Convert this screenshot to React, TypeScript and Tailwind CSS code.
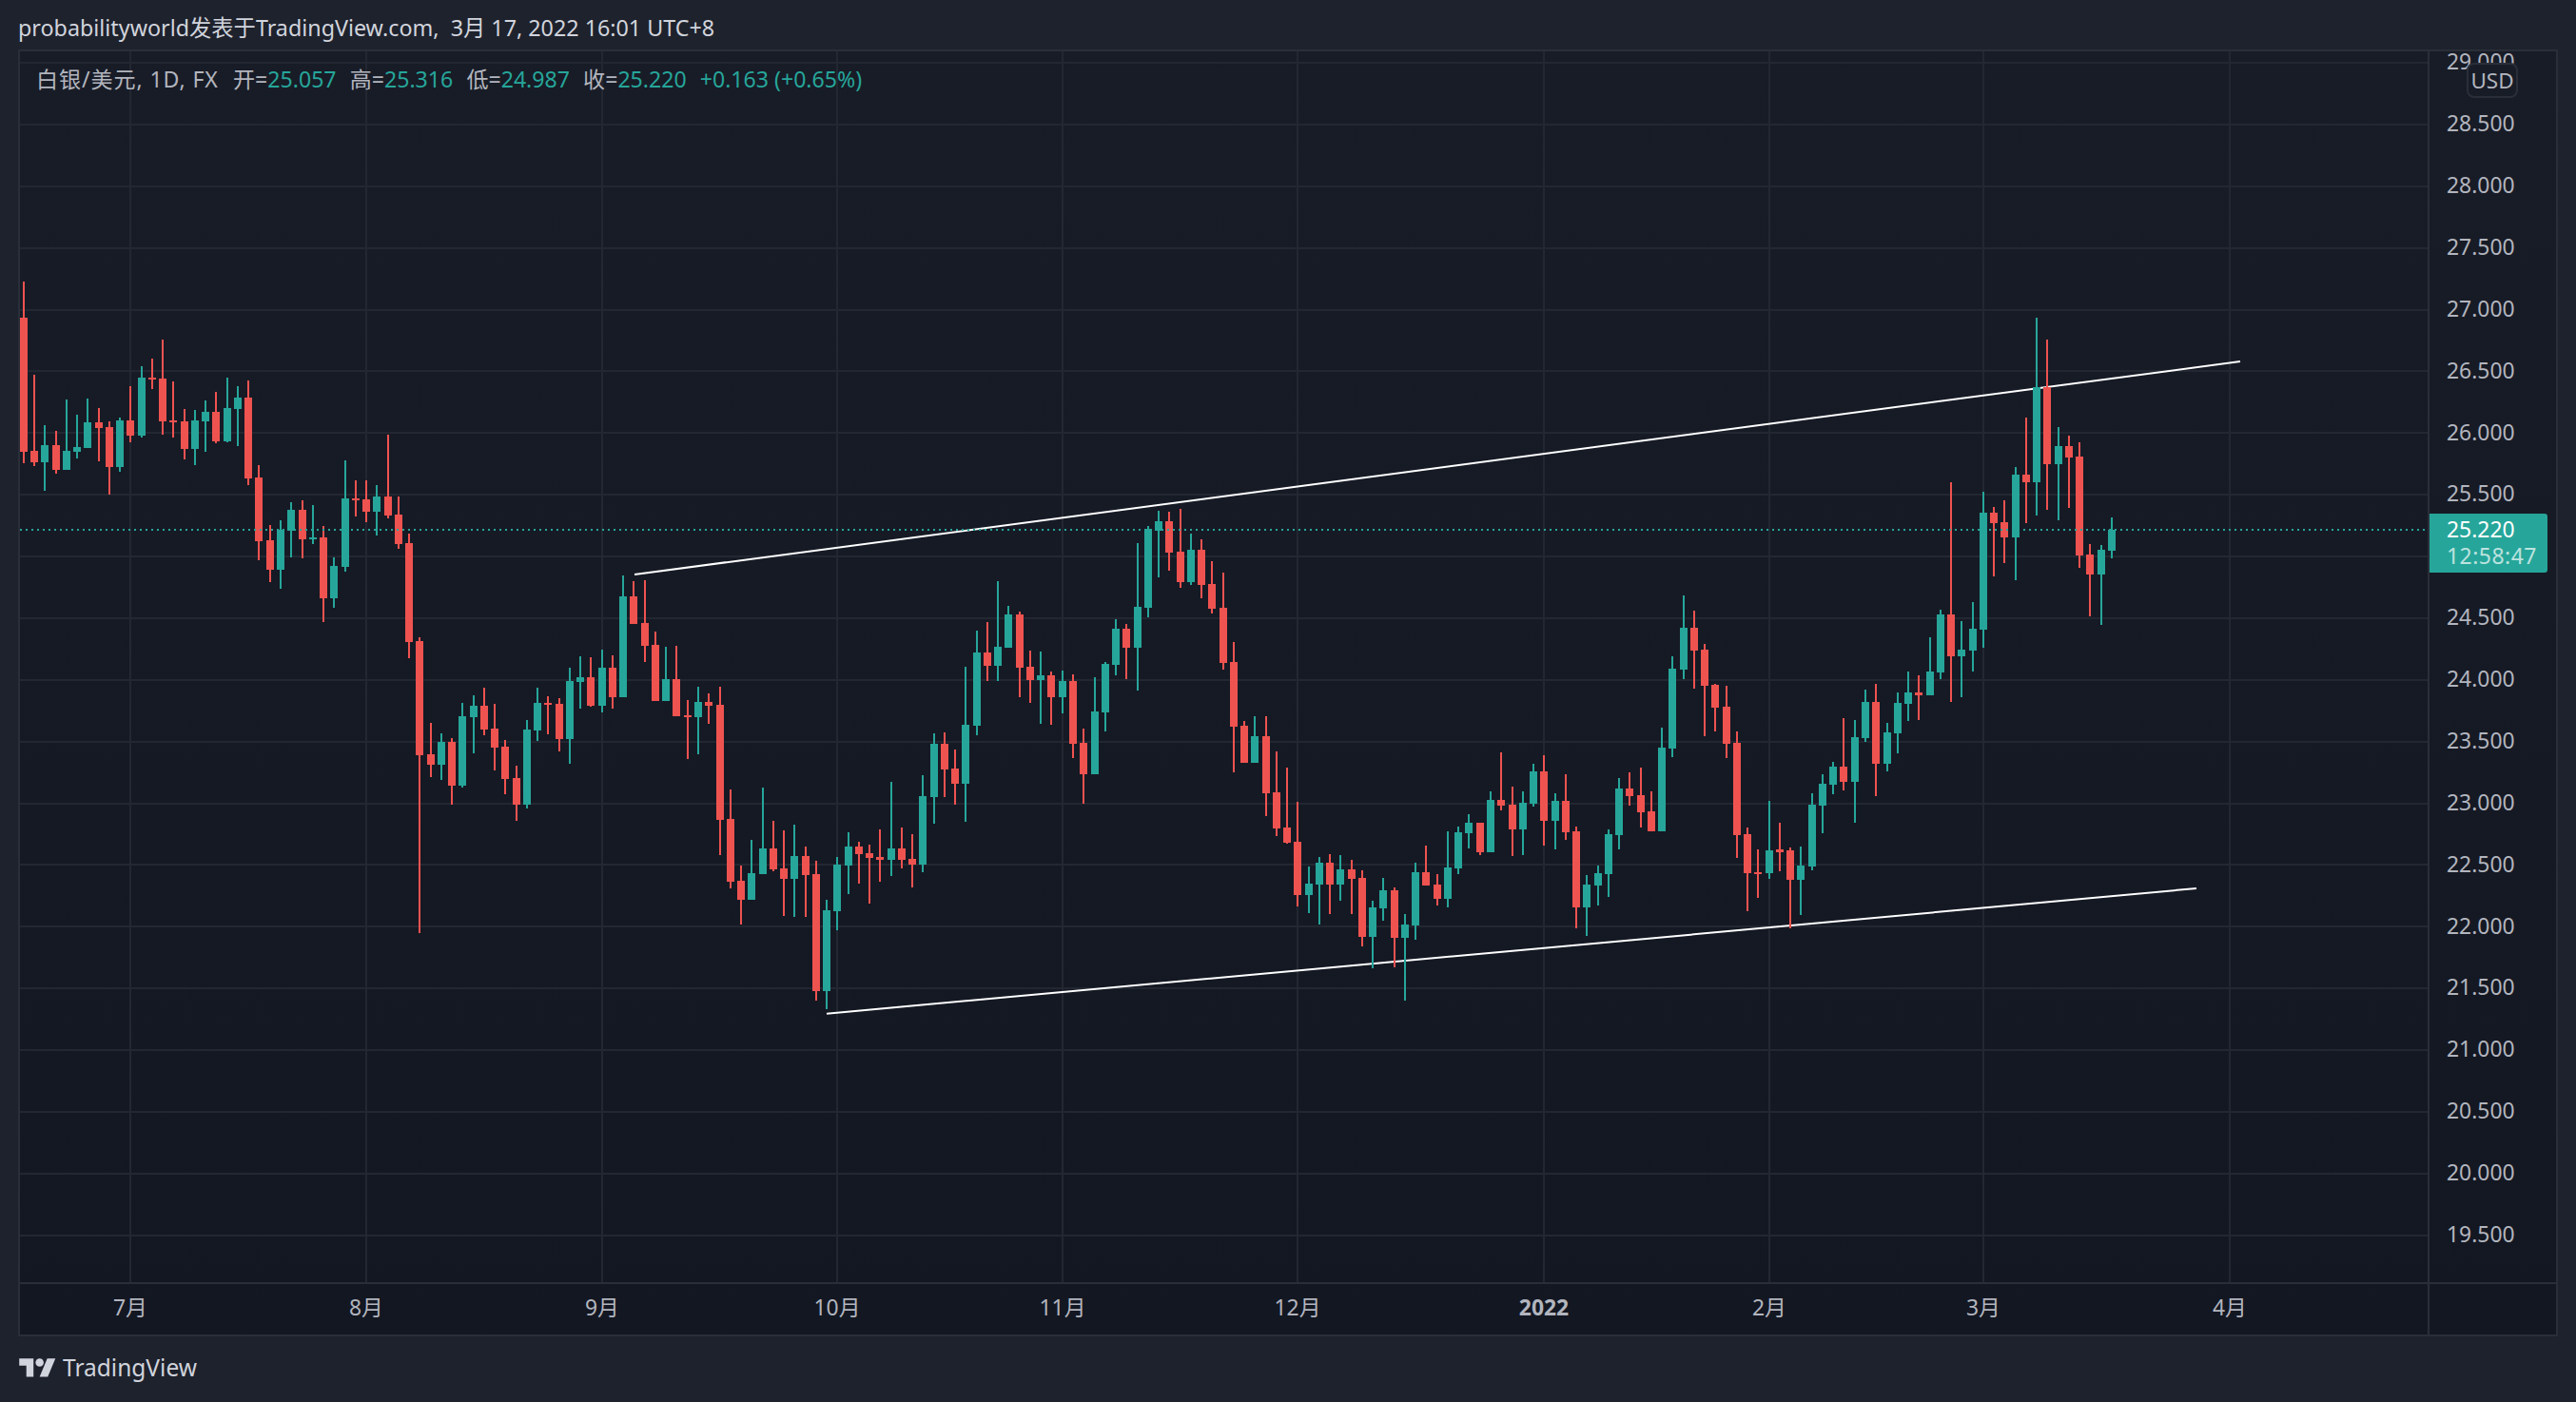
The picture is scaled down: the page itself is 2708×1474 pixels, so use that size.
const UP = "#26a69a";
const DOWN = "#ef5350";

type Row = [number, number, number, number, number, "R" | "G"];
type Segment = { ox: number; oy: number; sy: number; rows: Row[] };

const segments: Segment[] = [
  {
    ox: 0, oy: 280, sy: 3,
    rows: [
      [75, 48, 162, 585, 621, "R"], [108, 342, 582, 618, 630, "R"], [141, 501, 564, 618, 708, "G"],
      [177, 519, 564, 642, 654, "R"], [210, 420, 582, 642, 642, "G"], [243, 468, 570, 585, 606, "G"],
      [276, 417, 492, 573, 573, "G"], [312, 447, 492, 510, 615, "R"], [345, 489, 507, 633, 720, "R"],
      [378, 477, 486, 633, 648, "G"], [411, 378, 486, 534, 555, "R"], [447, 315, 351, 534, 540, "G"],
      [480, 291, 351, 357, 387, "R"], [513, 231, 354, 489, 531, "R"], [546, 363, 486, 492, 540, "R"],
      [582, 450, 489, 576, 609, "R"], [615, 453, 486, 576, 627, "G"], [648, 423, 459, 489, 585, "G"],
      [681, 396, 459, 552, 558, "R"], [717, 351, 447, 552, 555, "G"], [750, 378, 414, 450, 567, "G"],
      [783, 360, 414, 669, 690, "R"], [816, 627, 666, 867, 927, "R"], [852, 816, 864, 957, 996, "R"],
      [885, 801, 831, 957, 1017, "G"], [918, 744, 768, 834, 918, "G"], [954, 738, 768, 861, 921, "R"],
      [987, 753, 855, 861, 876, "G"], [1020, 819, 855, 1047, 1122, "R"], [1053, 918, 945, 1047, 1077, "G"],
      [1089, 612, 732, 948, 963, "G"], [1122, 675, 732, 738, 789, "R"], [1155, 675, 735, 774, 807, "R"],
      [1188, 690, 726, 774, 849, "G"], [1224, 531, 726, 786, 795, "R"], [1257, 726, 783, 876, 891, "R"],
      [1290, 843, 873, 1185, 1236, "R"],
    ],
  },
  {
    ox: 400, oy: 440, sy: 2.8,
    rows: [
      [123, 645, 655, 991, 1515, "R"], [159, 897, 988, 1019, 1056, "R"], [192, 927, 952, 1019, 1064, "G"],
      [225, 942, 952, 1081, 1137, "R"], [258, 837, 876, 1081, 1086, "G"], [294, 815, 846, 879, 986, "G"],
      [327, 792, 846, 916, 932, "R"], [360, 840, 913, 969, 1036, "R"], [393, 945, 966, 1061, 1106, "R"],
      [429, 1022, 1058, 1137, 1184, "R"], [462, 888, 916, 1137, 1148, "G"], [495, 792, 837, 918, 949, "G"],
      [528, 818, 837, 843, 930, "R"], [564, 823, 840, 944, 980, "R"], [597, 734, 773, 944, 1016, "G"],
      [630, 700, 762, 776, 854, "G"], [663, 703, 762, 846, 849, "R"], [699, 680, 734, 846, 865, "G"],
      [732, 697, 734, 820, 854, "R"], [765, 462, 524, 820, 820, "G"], [798, 479, 524, 605, 605, "R"],
      [834, 476, 602, 669, 717, "R"], [867, 627, 666, 832, 832, "R"], [900, 672, 767, 832, 832, "G"],
      [933, 669, 767, 876, 876, "R"], [969, 829, 874, 879, 1002, "R"], [1002, 790, 834, 879, 988, "G"],
      [1035, 809, 834, 846, 899, "R"], [1071, 790, 843, 1182, 1285, "R"], [1104, 1092, 1179, 1364, 1383, "R"],
      [1137, 1316, 1361, 1417, 1490, "R"], [1170, 1240, 1338, 1417, 1417, "G"], [1206, 1086, 1266, 1341, 1341, "G"],
      [1239, 1184, 1266, 1327, 1333, "R"], [1272, 1212, 1324, 1355, 1464, "R"], [1305, 1196, 1288, 1355, 1467, "G"],
      [1341, 1260, 1288, 1344, 1467, "R"],
    ],
  },
  {
    ox: 840, oy: 520, sy: 2.8,
    rows: [
      [54, 1078, 1117, 1462, 1490, "R"], [87, 1193, 1224, 1462, 1515, "G"], [120, 1067, 1089, 1226, 1282, "G"],
      [156, 994, 1036, 1092, 1176, "G"], [189, 1022, 1036, 1058, 1145, "R"], [222, 1030, 1056, 1070, 1204, "R"],
      [255, 986, 1067, 1075, 1140, "R"], [291, 846, 1042, 1075, 1123, "G"], [324, 980, 1042, 1075, 1100, "R"],
      [357, 1000, 1072, 1089, 1156, "R"], [390, 826, 888, 1089, 1112, "G"], [426, 703, 734, 890, 969, "G"],
      [459, 700, 734, 809, 890, "R"], [492, 750, 806, 851, 913, "R"], [525, 507, 678, 851, 963, "G"],
      [561, 400, 465, 680, 708, "G"], [594, 375, 465, 504, 549, "R"], [627, 255, 448, 504, 549, "G"],
      [660, 328, 353, 451, 451, "G"], [696, 344, 353, 510, 596, "R"], [729, 459, 507, 546, 613, "R"],
      [762, 462, 532, 546, 675, "G"], [795, 521, 532, 596, 678, "R"], [831, 518, 549, 596, 644, "G"],
      [864, 529, 549, 734, 776, "R"], [897, 689, 731, 823, 910, "R"], [933, 538, 638, 823, 823, "G"],
      [966, 493, 498, 641, 697, "G"], [999, 367, 395, 501, 532, "G"], [1032, 381, 395, 451, 543, "R"],
      [1068, 143, 330, 451, 577, "G"], [1101, 92, 101, 333, 361, "G"], [1134, 48, 78, 106, 244, "G"],
      [1167, 50, 78, 171, 224, "R"], [1203, 42, 168, 258, 274, "R"], [1236, 115, 162, 258, 266, "G"],
      [1269, 132, 162, 266, 305, "R"], [1302, 196, 263, 336, 350, "R"], [1338, 230, 333, 496, 515, "R"],
    ],
  },
  {
    ox: 1280, oy: 520, sy: 2.8,
    rows: [
      [51, 434, 493, 683, 818, "R"], [84, 666, 680, 790, 790, "R"], [117, 652, 711, 790, 790, "G"],
      [153, 652, 711, 879, 946, "R"], [186, 756, 876, 983, 1005, "R"], [219, 804, 980, 1025, 1028, "R"],
      [252, 904, 1022, 1179, 1212, "R"], [288, 1095, 1145, 1179, 1232, "G"], [321, 1067, 1084, 1148, 1266, "G"],
      [354, 1058, 1084, 1148, 1235, "R"], [387, 1061, 1103, 1148, 1196, "G"], [423, 1075, 1103, 1131, 1235, "R"],
      [456, 1106, 1128, 1302, 1330, "R"], [489, 1196, 1215, 1302, 1394, "G"], [522, 1128, 1165, 1218, 1254, "G"],
      [558, 1156, 1165, 1305, 1392, "R"], [591, 1235, 1266, 1305, 1490, "G"], [624, 1084, 1112, 1268, 1310, "G"],
      [657, 1033, 1112, 1151, 1151, "R"], [693, 1117, 1148, 1190, 1210, "R"], [726, 991, 1098, 1190, 1215, "G"],
      [759, 977, 994, 1100, 1117, "G"], [792, 941, 966, 997, 1042, "G"], [828, 966, 966, 1053, 1061, "R"],
      [861, 874, 899, 1053, 1053, "G"], [894, 759, 899, 916, 930, "R"], [930, 860, 913, 986, 1064, "R"],
      [963, 874, 907, 986, 1061, "G"], [996, 792, 815, 910, 918, "G"], [1029, 767, 815, 960, 1033, "R"],
      [1065, 879, 902, 960, 1044, "G"], [1098, 823, 902, 994, 1016, "R"], [1131, 977, 991, 1215, 1277, "R"],
      [1164, 1120, 1148, 1215, 1299, "G"], [1200, 1092, 1114, 1151, 1210, "G"], [1233, 986, 1000, 1117, 1184, "G"],
      [1266, 834, 865, 1002, 1044, "G"], [1299, 818, 865, 888, 916, "R"], [1335, 804, 885, 935, 980, "R"],
    ],
  },
  {
    ox: 1700, oy: 600, sy: 3,
    rows: [
      [108, 696, 759, 822, 822, "R"], [141, 495, 558, 822, 822, "G"], [174, 270, 309, 561, 588, "G"],
      [210, 78, 180, 312, 342, "G"], [243, 126, 180, 252, 372, "R"], [276, 231, 249, 363, 522, "R"],
      [309, 357, 360, 432, 507, "R"], [345, 363, 429, 546, 591, "R"], [378, 507, 543, 834, 906, "R"],
      [411, 810, 831, 954, 1074, "R"], [444, 879, 950, 956, 1032, "R"], [480, 726, 882, 954, 972, "G"],
      [513, 795, 880, 887, 948, "R"], [546, 873, 882, 975, 1128, "R"], [579, 870, 930, 975, 1086, "G"],
      [615, 702, 738, 933, 945, "G"], [648, 642, 672, 741, 828, "G"], [681, 603, 618, 675, 705, "G"],
      [714, 465, 618, 666, 693, "R"], [750, 471, 525, 666, 795, "G"], [783, 375, 414, 528, 540, "G"],
      [816, 357, 414, 609, 711, "R"], [852, 480, 510, 609, 633, "G"], [885, 384, 417, 513, 576, "G"],
      [918, 318, 384, 420, 474, "G"], [951, 330, 385, 392, 471, "R"], [987, 210, 318, 393, 393, "G"],
    ],
  },
  {
    ox: 2000, oy: 320, sy: 3,
    rows: [
      [120, 963, 978, 1161, 1182, "G"], [153, 561, 978, 1110, 1254, "R"], [186, 999, 1089, 1110, 1239, "G"],
      [222, 939, 1023, 1092, 1158, "G"], [255, 591, 657, 1026, 1083, "G"], [288, 640, 657, 690, 858, "R"],
      [321, 618, 687, 735, 816, "R"], [357, 513, 537, 735, 870, "G"], [390, 357, 537, 561, 690, "R"],
      [423, 42, 261, 561, 666, "G"], [456, 111, 261, 504, 648, "R"], [492, 387, 447, 504, 681, "G"],
      [525, 414, 447, 483, 642, "R"], [558, 435, 480, 792, 831, "R"], [591, 756, 789, 852, 984, "R"],
      [627, 759, 774, 852, 1011, "G"], [660, 672, 711, 777, 801, "G"],
    ],
  },
];

const months = [
  { x: 137, label: "7月" },
  { x: 385, label: "8月" },
  { x: 633, label: "9月" },
  { x: 880, label: "10月" },
  { x: 1117, label: "11月" },
  { x: 1364, label: "12月" },
  { x: 1623, label: "2022", bold: true },
  { x: 1860, label: "2月" },
  { x: 2085, label: "3月" },
  { x: 2344, label: "4月" },
];

const prices = Array.from({ length: 20 }, (_, i) => (29 - i * 0.5).toFixed(3));
const PLOT_LEFT = 21;
const PLOT_TOP = 54;
const PLOT_WIDTH = 2531;
const PLOT_HEIGHT = 1294;
const rowHeight = 64.88;

function Candle({ seg, row }: { seg: Segment; row: Row }) {
  const [zx, wt, bt, bb, wb, c] = row;
  const x = Math.round(seg.ox + zx / 3);
  const y = (v: number) => Math.round(seg.oy + v / seg.sy);
  const fill = c === "R" ? DOWN : UP;
  const top = y(bt);
  const bodyH = Math.max(2, y(bb) - top);
  return (
    <g fill={fill}>
      <rect x={x - 1} y={y(wt)} width={2} height={Math.max(0, y(wb) - y(wt))} />
      <rect x={x - 4} y={top} width={8} height={bodyH} />
    </g>
  );
}

function PlotDrawing() {
  return (
    <svg
      className="block h-full w-full"
      viewBox={`${PLOT_LEFT} ${PLOT_TOP} ${PLOT_WIDTH} ${PLOT_HEIGHT}`}
    >
      <g shapeRendering="crispEdges" fill="#232732">
        {prices.map((_, i) => (
          <rect key={i} x={PLOT_LEFT} y={Math.round(66 + i * rowHeight) - 1} width={PLOT_WIDTH} height={2} />
        ))}
        {months.map((m) => (
          <rect key={m.x} x={m.x - 1} y={PLOT_TOP} width={2} height={PLOT_HEIGHT} />
        ))}
      </g>
      <line x1={667} y1={604} x2={2355} y2={380} stroke="#ffffff" strokeWidth={2} />
      <line x1={869} y1={1065.7} x2={2309} y2={934} stroke="#ffffff" strokeWidth={2} />
      <g shapeRendering="crispEdges">
        {segments.map((seg) => seg.rows.map((row) => <Candle key={`${seg.ox}-${row[0]}`} seg={seg} row={row} />))}
      </g>
      <line
        x1={PLOT_LEFT}
        y1={557}
        x2={PLOT_LEFT + PLOT_WIDTH}
        y2={557}
        stroke={UP}
        strokeWidth={2}
        strokeDasharray="2 4"
        shapeRendering="crispEdges"
      />
    </svg>
  );
}

function Legend() {
  const items = [
    ["开", "25.057"],
    ["高", "25.316"],
    ["低", "24.987"],
    ["收", "25.220"],
  ];
  return (
    <div className="absolute left-[17px] top-[17px] flex items-center whitespace-nowrap text-[23.1px] leading-[24px] text-[#b2b5be]">
      <span className="w-[207px] tracking-[0.9px]">白银/美元, 1D, FX</span>
      {items.map(([k, v]) => (
        <span key={k} className="w-[122.7px]">
          {k}=<span className="text-[#26a69a]">{v}</span>
        </span>
      ))}
      <span className="text-[#26a69a]">+0.163 (+0.65%)</span>
    </div>
  );
}

function Logo() {
  return (
    <svg viewBox="0 0 36 28" className="h-[30px] w-[39px] fill-[#d1d4dc]">
      <path d="M14 22H7V11H0V4h14v18zM28 22h-8l7.5-18h8L28 22z" />
      <circle cx="20" cy="8" r="4" />
    </svg>
  );
}

export default function App() {
  return (
    <div
      className="flex h-[1474px] w-[2708px] flex-col overflow-hidden bg-[#1e222d] text-[22.9px]"
      style={{ fontFamily: '"Noto Sans", "Noto Sans CJK SC", sans-serif' }}
    >
      <header className="flex h-[52px] shrink-0 items-center pl-[19px] pt-[7px] text-[23.3px] text-[#d1d4dc]">
        probabilityworld发表于TradingView.com,&nbsp;&nbsp;3月 17, 2022 16:01 UTC+8
      </header>
      <div className="ml-[19px] mr-[19px] flex h-[1353px] shrink-0 flex-col border-2 border-[#2a2e39] bg-gradient-to-b from-[#181c27] to-[#131722]">
        <div className="flex h-[1294px] shrink-0">
          <div className="relative h-full w-[2531px] shrink-0 overflow-hidden">
            <PlotDrawing />
            <Legend />
          </div>
          <div className="relative flex-1 overflow-hidden border-l-2 border-[#2a2e39] pl-[18px] text-[#b2b5be]">
            <div className="mt-[-20.9px] flex flex-col">
              {prices.map((p) => (
                <div key={p} className="flex h-[64.88px] shrink-0 items-center">
                  {p}
                </div>
              ))}
            </div>
            <div className="absolute left-[39px] top-[12px] flex h-[37px] w-[54px] items-center justify-center rounded-[8px] border-2 border-[#2a2e39] bg-[#181c27] text-[22.5px]">
              USD
            </div>
            <div className="absolute left-0 top-[486px] flex h-[62px] w-[124px] flex-col justify-center rounded-r-[3px] bg-[#26a69a] pl-[18px] leading-[28px] text-white">
              <span>25.220</span>
              <span className="tracking-[0.5px] text-white/70">12:58:47</span>
            </div>
          </div>
        </div>
        <div className="flex flex-1 border-t-2 border-[#2a2e39]">
          <div className="flex h-full w-[2531px] shrink-0 items-center pb-[3px] text-[#b2b5be]">
            {months.map((m, i) => (
              <span
                key={m.x}
                className={m.bold ? "flex w-0 justify-center whitespace-nowrap font-bold" : "flex w-0 justify-center whitespace-nowrap"}
                style={{ marginLeft: m.x - (i === 0 ? PLOT_LEFT : months[i - 1].x) }}
              >
                {m.label}
              </span>
            ))}
          </div>
          <div className="flex-1 border-l-2 border-[#2a2e39]" />
        </div>
      </div>
      <footer className="flex flex-1 items-center gap-[7px] pb-[2px] pl-[20px] text-[24.5px] text-[#d1d4dc]">
        <Logo />
        <span>TradingView</span>
      </footer>
    </div>
  );
}
